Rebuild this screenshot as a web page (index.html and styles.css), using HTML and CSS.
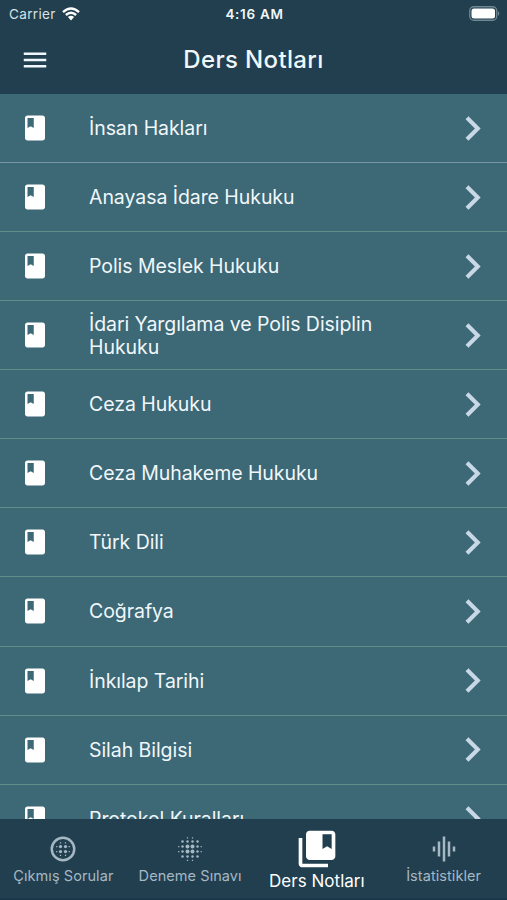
FILE: index.html
```html
<!DOCTYPE html>
<html lang="tr">
<head>
<meta charset="utf-8">
<title>Ders Notları</title>
<link rel="stylesheet" href="styles.css">
</head>
<body>
<svg class="defs" aria-hidden="true">
  <symbol id="book" viewBox="0 0 24 24"><path d="M18 2H6c-1.1 0-2 .9-2 2v16c0 1.1.9 2 2 2h12c1.1 0 2-.9 2-2V4c0-1.1-.9-2-2-2zM6 4h5v8l-2.5-1.5L6 12V4z"/></symbol>
  <symbol id="chevron" viewBox="0 0 24 24"><path d="M10 6L8.59 7.41 13.17 12l-4.58 4.59L10 18l6-6z"/></symbol>
</svg>
<div class="screen">
  <header class="header">
    <div class="status">
      <div class="carrier"><span>Carrier</span><svg class="wifi" viewBox="0 0 18 14"><path d="M1 5.2Q9-2 17 5.2M3.9 8Q9 3.5 14.1 8" fill="none" stroke="#fff" stroke-width="2.4"/><path d="M5.9 10.1Q9 7.600 12.100 10.100L9 13.500z"/></svg></div>
      <span class="time">4:16 AM</span>
      <svg class="battery" viewBox="0 0 31 15"><rect x=".75" y=".75" width="27" height="13.500" rx="4" fill="none" stroke="#718791" stroke-width="1.300"/><rect x="2.500" y="2.500" width="23.500" height="10" rx="2.500"/><path d="M29 5q2.500 2.500 0 5z" fill="#718791"/></svg>
    </div>
    <div class="appbar">
      <svg class="menu" viewBox="0 0 24 24"><path d="M3 18h18v-2H3v2zm0-5h18v-2H3v2zm0-7v2h18V6H3z"/></svg>
      <h1>Ders Notları</h1>
      <span></span>
    </div>
  </header>
  <main class="list">
    <div class="row first"><svg class="book"><use href="#book"/></svg><span>İnsan Hakları</span><svg class="chev"><use href="#chevron"/></svg></div>
    <div class="row"><svg class="book"><use href="#book"/></svg><span>Anayasa İdare Hukuku</span><svg class="chev"><use href="#chevron"/></svg></div>
    <div class="row"><svg class="book"><use href="#book"/></svg><span>Polis Meslek Hukuku</span><svg class="chev"><use href="#chevron"/></svg></div>
    <div class="row"><svg class="book"><use href="#book"/></svg><span>İdari Yargılama ve Polis Disiplin Hukuku</span><svg class="chev"><use href="#chevron"/></svg></div>
    <div class="row"><svg class="book"><use href="#book"/></svg><span>Ceza Hukuku</span><svg class="chev"><use href="#chevron"/></svg></div>
    <div class="row"><svg class="book"><use href="#book"/></svg><span>Ceza Muhakeme Hukuku</span><svg class="chev"><use href="#chevron"/></svg></div>
    <div class="row"><svg class="book"><use href="#book"/></svg><span>Türk Dili</span><svg class="chev"><use href="#chevron"/></svg></div>
    <div class="row"><svg class="book"><use href="#book"/></svg><span>Coğrafya</span><svg class="chev"><use href="#chevron"/></svg></div>
    <div class="row"><svg class="book"><use href="#book"/></svg><span>İnkılap Tarihi</span><svg class="chev"><use href="#chevron"/></svg></div>
    <div class="row"><svg class="book"><use href="#book"/></svg><span>Silah Bilgisi</span><svg class="chev"><use href="#chevron"/></svg></div>
    <div class="row"><svg class="book"><use href="#book"/></svg><span>Protokol Kuralları</span><svg class="chev"><use href="#chevron"/></svg></div>
  </main>
  <nav class="tabs">
    <div class="tab"><svg viewBox="0 0 24 24"><circle cx="12" cy="12" r="9" fill="none" stroke="currentColor" stroke-width="2"/><circle cx="10" cy="10" r="1.300"/><circle cx="14" cy="10" r="1.300"/><circle cx="10" cy="14" r="1.300"/><circle cx="14" cy="14" r="1.300"/><path d="M9.500 6.500h1v1h-1zM13.500 6.500h1v1h-1zM6.500 9.500h1v1h-1zM6.500 13.500h1v1h-1zM16.500 9.500h1v1h-1zM16.500 13.500h1v1h-1zM9.500 16.500h1v1h-1zM13.500 16.500h1v1h-1z"/></svg><span>Çıkmış Sorular</span></div>
    <div class="tab"><svg viewBox="0 0 24 24"><circle cx="10" cy="10" r="1.600"/><circle cx="14" cy="10" r="1.600"/><circle cx="10" cy="14" r="1.600"/><circle cx="14" cy="14" r="1.600"/><g><circle cx="6" cy="6" r="1"/><circle cx="10" cy="6" r="1"/><circle cx="14" cy="6" r="1"/><circle cx="18" cy="6" r="1"/><circle cx="6" cy="10" r="1"/><circle cx="18" cy="10" r="1"/><circle cx="6" cy="14" r="1"/><circle cx="18" cy="14" r="1"/><circle cx="6" cy="18" r="1"/><circle cx="10" cy="18" r="1"/><circle cx="14" cy="18" r="1"/><circle cx="18" cy="18" r="1"/></g><path d="M9.500 2.500h1v1h-1zM13.500 2.500h1v1h-1zM2.500 9.500h1v1h-1zM2.500 13.500h1v1h-1zM20.500 9.500h1v1h-1zM20.500 13.500h1v1h-1zM9.500 20.500h1v1h-1zM13.500 20.500h1v1h-1z"/></svg><span>Deneme Sınavı</span></div>
    <div class="tab active"><svg viewBox="0 0 24 24"><path d="M4 6H2v14c0 1.100.9 2 2 2h14v-2H4V6z"/><path d="M20 2H8c-1.100 0-2 .9-2 2v12c0 1.100.9 2 2 2h12c1.100 0 2-.9 2-2V4c0-1.100-.9-2-2-2zm0 10l-2.500-1.500L15 12V4h5v8z"/></svg><span>Ders Notları</span></div>
    <div class="tab"><svg viewBox="0 0 24 24"><path d="M7 18h2V6H7v12zm4 4h2V2h-2v20zm-8-8h2v-4H3v4zm12 4h2V6h-2v12zm4-8v4h2v-4h-2z"/></svg><span>İstatistikler</span></div>
  </nav>
</div>
</body>
</html>
```
FILE: styles.css
```css
* { box-sizing: border-box; }
body { margin: 0; font-family: Inter, "Liberation Sans", sans-serif; color: #f0f7fa; background: #213f4f; }
svg { display: block; flex: none; fill: currentColor; }
.defs { width: 0; height: 0; position: absolute; }
.screen { height: 900px; display: flex; flex-direction: column; overflow: hidden; }
.header { flex: none; height: 94px; background: #213f4f; }
.status { height: 27px; display: grid; grid-template-columns: 1fr auto 1fr; align-items: center; padding: 0 7px 0 9px; font-size: 13.5px; }
.carrier { display: flex; gap: 6px; align-items: center; color: #d8e1e5; letter-spacing: .35px; }
.wifi { width: 18px; height: 14px; color: #fff; }
.time { font-weight: 600; letter-spacing: .7px; }
.battery { justify-self: end; width: 31px; height: 15px; color: #fff; }
.appbar { height: 66px; display: grid; grid-template-columns: 1fr auto 1fr; align-items: center; padding: 0 20px; }
.menu { width: 30px; height: 30px; }
h1 { margin: 0; padding-bottom: 2px; font-size: 24px; font-weight: 500; letter-spacing: .35px; }
.list { flex: 1; min-height: 0; overflow: hidden; background: #3d6876; }
.row { height: 69.07px; display: flex; align-items: center; padding: 0 10px 0 20px; border-bottom: 1.5px solid #5d9089; }
.row.first { border-color: #7897a6; }
.row span { flex: 1; margin-left: 39px; padding: 1px 48px 0 0; font-size: 19.5px; line-height: 23px; letter-spacing: -.06px; }
.book { width: 30px; height: 30px; color: #fff; }
.chev { width: 49px; height: 49px; color: #c8d8e6; }
.tabs { flex: none; height: 81px; display: grid; grid-template-columns: repeat(4, 1fr); background: #213f4f; border-bottom: 2px solid #1b374a; }
.tab { display: flex; flex-direction: column; align-items: center; color: #a6b8c3; font-size: 14.5px; line-height: 18px; letter-spacing: .07px; white-space: nowrap; padding-top: 15px; gap: 3px; }
.tab svg { width: 30px; height: 30px; }
.active { color: #fff; font-size: 17px; letter-spacing: .02px; padding-top: 8px; gap: 1px; }
.active svg { width: 44px; height: 44px; }
```
